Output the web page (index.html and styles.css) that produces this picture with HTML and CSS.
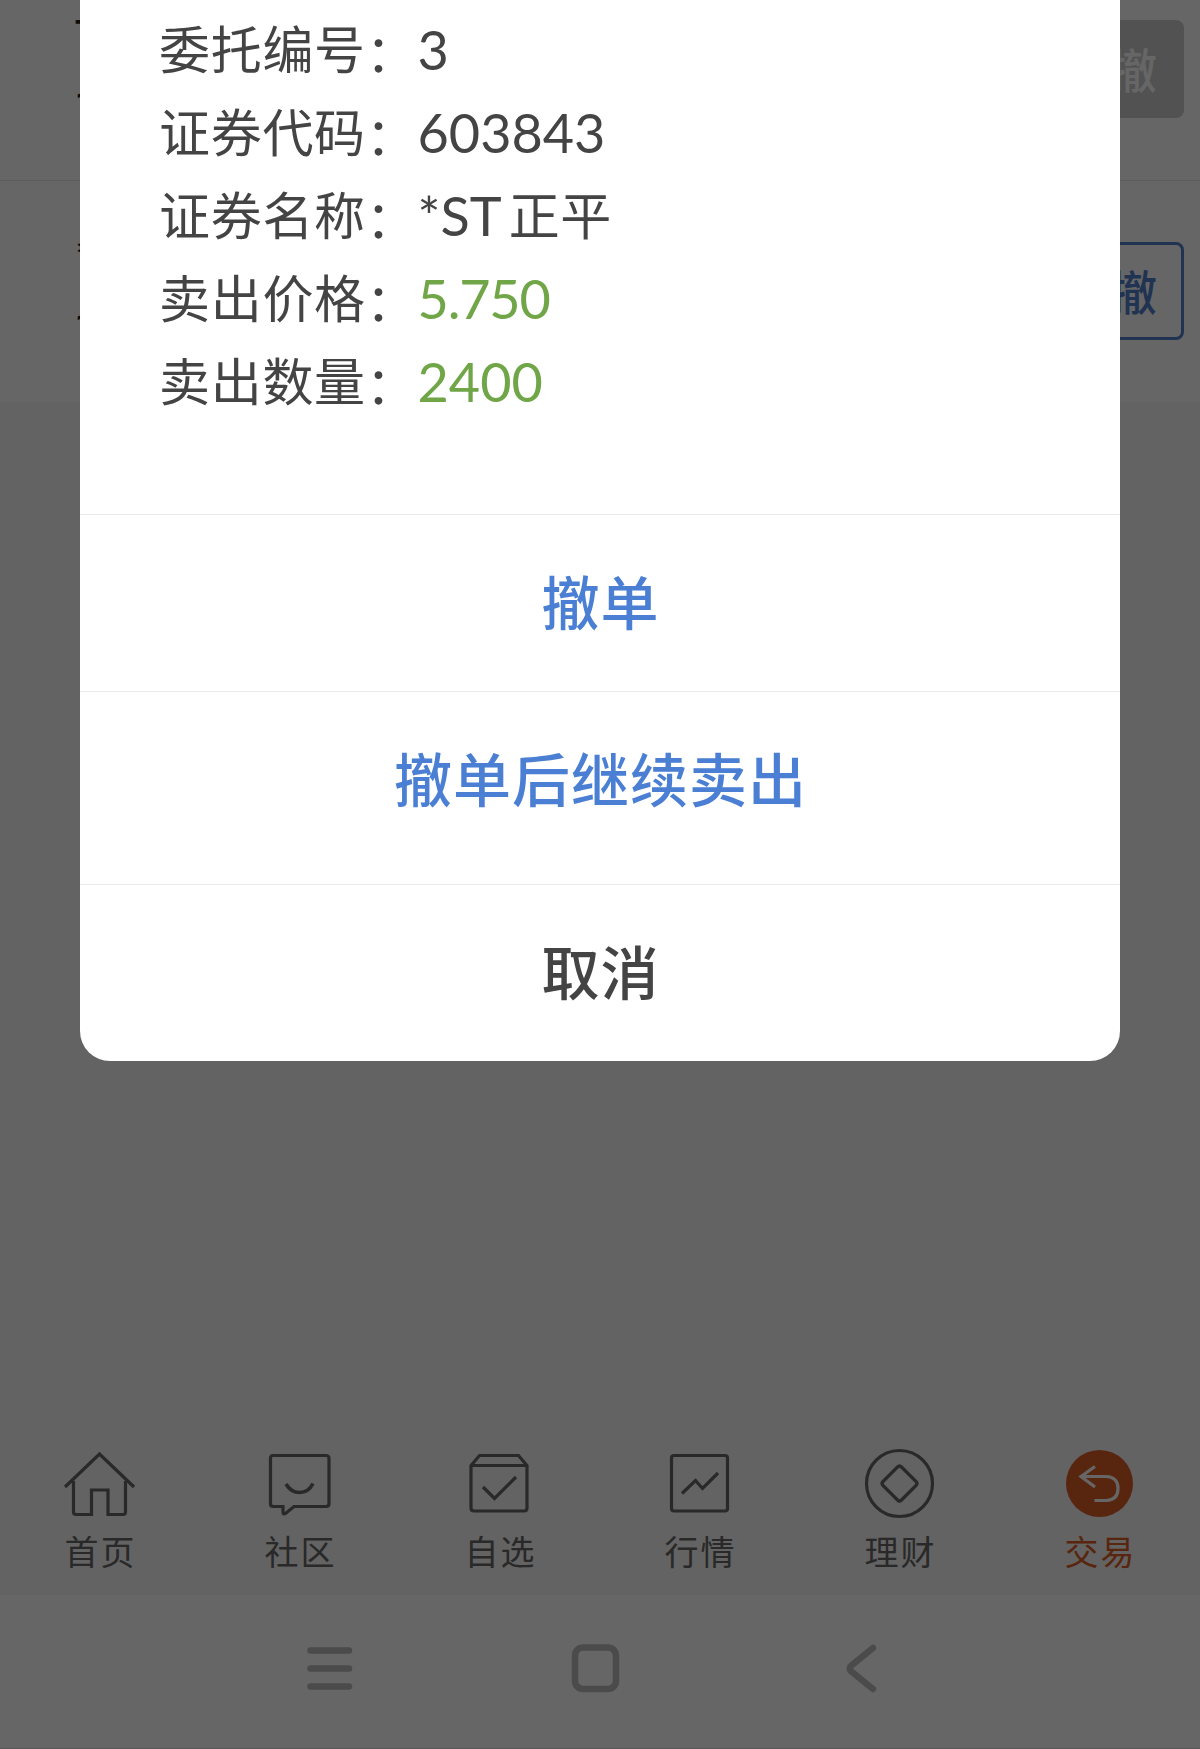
FILE: index.html
```html
<!DOCTYPE html>
<html lang="zh-CN">
<head>
    <meta charset="UTF-8">
    <meta name="viewport" content="width=device-width, initial-scale=1.0">
    <title>撤单</title>
    <link rel="stylesheet" href="styles.css">
</head>
<body>
    <div class="page">
        <div class="order-list">
            <div class="order-row">
                <div class="order-info">
                    <span>T</span>
                    <span class="order-time">1</span>
                </div>
                <button class="cancel-btn disabled">撤</button>
            </div>
            <div class="order-row">
                <div class="order-info">
                    <span>*</span>
                    <span class="order-time">1</span>
                </div>
                <button class="cancel-btn">撤</button>
            </div>
        </div>

        <nav class="tab-bar">
            <a class="tab">
                <svg width="80" height="80" viewBox="0 0 80 80">
                    <path d="M5 47 L39.500 14 L74 47 M13.500 41 V72 Q13.500 74.500 16 74.500 H31.500 V50 H48 V74.500 H63 Q65.500 74.500 65.500 72 V41"/>
                </svg>
                <span>首页</span>
            </a>
            <a class="tab">
                <svg width="80" height="80" viewBox="0 0 80 80">
                    <path d="M13 15.500 H66 Q69 15.500 69 18.500 V63.500 Q69 66.500 66 66.500 H34 L25.500 73.500 Q23 75 23 72 V66.500 H13 Q10.500 66.500 10.500 63.500 V18.500 Q10.500 15.500 13 15.500 Z"/>
                    <path class="bold" d="M26 44 Q31 52.500 39.500 52.500 Q48.500 52.500 53 43.500"/>
                </svg>
                <span>社区</span>
            </a>
            <a class="tab">
                <svg width="80" height="80" viewBox="0 0 80 80">
                    <path d="M11 25.500 V68 Q11 71 14 71 H64 Q67 71 67 68 V25.500 L58.500 15.500 H19.500 Z M11 25.500 H67"/>
                    <path d="M23 47 L34.500 58.500 L56 37"/>
                </svg>
                <span>自选</span>
            </a>
            <a class="tab">
                <svg width="80" height="80" viewBox="0 0 80 80">
                    <rect x="11.500" y="15.500" width="56" height="55.500" rx="2.500"/>
                    <path d="M22 53.500 L35.500 40.500 L42.500 48.500 L58 33"/>
                </svg>
                <span>行情</span>
            </a>
            <a class="tab">
                <svg width="80" height="80" viewBox="0 0 80 80">
                    <circle cx="39.500" cy="43.500" r="33"/>
                    <path d="M37.500 27 Q39.500 25 41.500 27 L56 41.500 Q58 43.500 56 45.500 L41.500 60 Q39.500 62 37.500 60 L23 45.500 Q21 43.500 23 41.500 Z"/>
                </svg>
                <span>理财</span>
            </a>
            <a class="tab active">
                <svg width="80" height="80" viewBox="0 0 80 80">
                    <circle class="disc" cx="39.500" cy="43.500" r="33.500"/>
                    <path class="arrow" d="M35 26.500 L21 36.500 L35 47 M21 36.500 H46 Q58 37 58 48.500 Q58 60 46 60.500 H34.500"/>
                </svg>
                <span>交易</span>
            </a>
        </nav>

        <div class="system-bar">
            <svg width="1200" height="153" viewBox="0 0 1200 153">
                <path d="M310.500 55.500 H349 M310.500 73.500 H349 M310.500 91.500 H349"/>
                <rect x="575" y="52.500" width="41" height="41.500" rx="8"/>
                <path d="M873 53 L852 70 Q847.500 73.500 852 77 L873 94"/>
            </svg>
        </div>
    </div>

    <div class="overlay">
        <div class="dialog">
            <dl class="details">
                <div class="detail"><dt>委托编号<span class="colon">：</span></dt><dd>3</dd></div>
                <div class="detail"><dt>证券代码<span class="colon">：</span></dt><dd>603843</dd></div>
                <div class="detail"><dt>证券名称<span class="colon">：</span></dt><dd>*ST<span class="cjk">正平</span></dd></div>
                <div class="detail"><dt>卖出价格<span class="colon">：</span></dt><dd class="green price">5.750</dd></div>
                <div class="detail"><dt>卖出数量<span class="colon">：</span></dt><dd class="green">2400</dd></div>
            </dl>
            <button class="action">撤单</button>
            <button class="action resell">撤单后继续卖出</button>
            <button class="action cancel">取消</button>
        </div>
    </div>
</body>
</html>
```

FILE: styles.css
```css
* {
    box-sizing: border-box;
}
body {
    margin: 0;
    font-family: "Noto Sans CJK SC", sans-serif;
    color: #444;
    background-color: #f7f7f7;
}
button {
    font-family: inherit;
    cursor: pointer;
}
.page {
    display: flex;
    flex-direction: column;
    height: 1749px;
    overflow: hidden;
}
.order-list {
    height: 402px;
    background-color: #fff;
}
.order-row {
    display: flex;
    justify-content: space-between;
    height: 221px;
    padding: 61px 16px 0 75px;
}
.order-row:first-child {
    height: 181px;
    padding-top: 20px;
    border-bottom: 1px solid #e6e6e6;
}
.order-info {
    display: flex;
    flex-direction: column;
    gap: 30px;
    margin-top: -7px;
    font-family: Lato, sans-serif;
    font-size: 44px;
    line-height: 44px;
    color: #222;
}
.order-time {
    margin: -2px 0 0 -1px;
    font-family: Roboto, sans-serif;
}
.cancel-btn {
    width: 130px;
    height: 98px;
    padding: 0 24px 3px 0;
    border: 3px solid #5080cc;
    border-radius: 8px;
    background: none;
    color: #5080cc;
    font-size: 47px;
    font-weight: 500;
    line-height: 1;
    text-align: right;
}
.cancel-btn.disabled {
    border-color: #ccc;
    background-color: #ccc;
    color: #fff;
}

/* 底部导航 */
.tab-bar {
    display: flex;
    height: 165px;
    margin-top: auto;
    padding-top: 10px;
}
.tab {
    display: flex;
    flex: 1;
    flex-direction: column;
    align-items: center;
    color: #666;
    font-size: 34px;
    line-height: 50px;
    letter-spacing: 2px;
}
.tab svg {
    fill: none;
    stroke: #666;
    stroke-width: 3.2;
}
.tab .bold {
    stroke-width: 3.6;
}
.tab span {
    margin: 6px 0 0 1px;
}
.tab.active {
    color: #dc5c26;
}
.tab .disc {
    fill: #dc5c26;
    stroke: none;
}
.tab .arrow {
    stroke: #fff;
}
.system-bar {
    height: 154px;
    background-color: #fff;
    border-bottom: 1px solid #ddd;
}
.system-bar svg {
    display: block;
    fill: none;
    stroke: #bbb;
    stroke-width: 6.5;
    stroke-linecap: round;
}

/* 撤单确认弹窗 */
.overlay {
    position: absolute;
    inset: 0;
    background-color: rgba(0, 0, 0, 0.6);
}
.dialog {
    width: 1040px;
    height: 1061px;
    margin: 0 auto;
    overflow: hidden;
    background-color: #fff;
    border-radius: 0 0 30px 30px;
}
.details {
    height: 514px;
    margin: 0;
    padding: 8px 79px 0;
}
.detail {
    display: flex;
    height: 83px;
    font-size: 51px;
    line-height: 79px;
    letter-spacing: 0.7px;
}
.detail .colon {
    display: inline-block;
    padding-top: 2px;
    line-height: 81px;
    vertical-align: top;
}
.detail dd {
    margin: 0;
    font-family: Lato, "Noto Sans CJK SC", sans-serif;
    font-size: 54px;
    line-height: 83px;
    letter-spacing: 0;
}
.detail .cjk {
    margin-left: 7px;
    font-size: 51px;
    letter-spacing: 0.7px;
    vertical-align: 1px;
}
.detail .green {
    color: #70a548;
}
.detail .price {
    letter-spacing: -1.2px;
}
.action {
    display: block;
    width: 100%;
    height: 177px;
    padding: 0 0 7px 1px;
    border: none;
    border-top: 1px solid #eaeaea;
    background: none;
    color: #4a7fd4;
    font-size: 58px;
    font-weight: 500;
    letter-spacing: 1px;
}
.resell {
    height: 193px;
    padding-bottom: 23px;
}
.cancel {
    color: #444;
}
```
